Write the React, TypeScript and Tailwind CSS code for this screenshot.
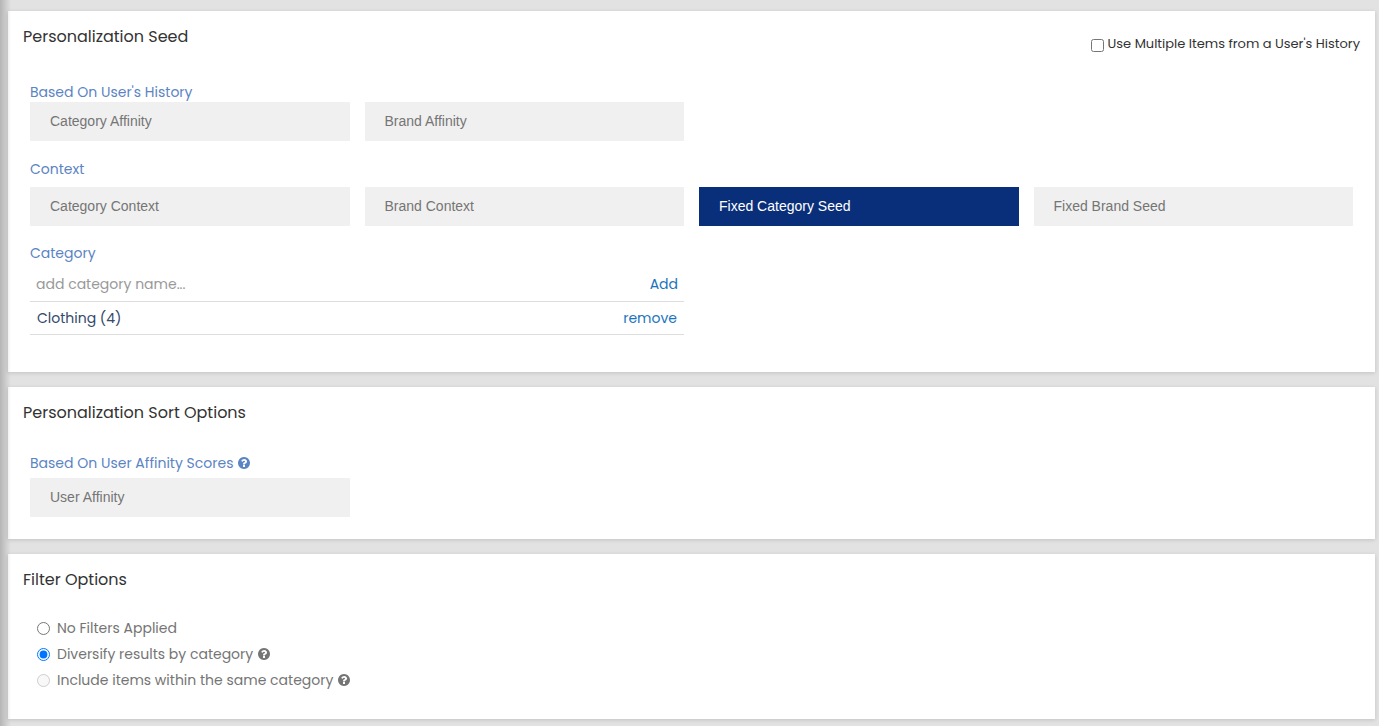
import { useState } from "react";
import type { ReactNode } from "react";
import clsx from "clsx";

function HelpIcon() {
  return (
    <svg viewBox="0 0 1792 1792" className="size-3.5 shrink-0" fill="currentColor" role="img" aria-label="Help">
      <path d="M1024 1376v-192q0-14-9-23t-23-9h-192q-14 0-23 9t-9 23v192q0 14 9 23t23 9h192q14 0 23-9t9-23zm256-672q0-88-55.5-163t-138.5-116-170-41q-243 0-371 213-15 24 8 42l132 100q7 6 19 6 16 0 25-12 53-68 86-92 34-24 86-24 48 0 85.500 26t37.500 59q0 38-20 61t-68 45q-63 28-115.500 86.500t-52.500 125.500v36q0 14 9 23t23 9h192q14 0 23-9t9-23q0-19 21.500-49.500t54.500-49.500q32-18 49-28.500t46-35 44.500-48 28-60.500 12.500-81zm384 192q0 209-103 385.500t-279.500 279.500-385.500 103-385.500-103-279.500-279.500-103-385.500 103-385.500 279.500-279.500 385.500-103 385.500 103 279.500 279.500 103 385.500z" />
    </svg>
  );
}

function Card({ title, action, children }: { title: string; action?: ReactNode; children: ReactNode }) {
  return (
    <section className="bg-white pt-4 shadow-[0_1px_4px_rgba(0,0,0,0.14)]">
      <div className="flex h-5 items-start justify-between px-[15px]">
        <h2 className="text-base leading-5 text-[#333]">{title}</h2>
        {action}
      </div>
      {children}
    </section>
  );
}

function Label({ children }: { children: ReactNode }) {
  return <h3 className="flex items-center gap-1 text-sm leading-5 text-[#5b84c4]">{children}</h3>;
}

function Tile({ label, selected, onSelect }: { label: string; selected: boolean; onSelect: () => void }) {
  return (
    <button
      type="button"
      aria-pressed={selected}
      onClick={onSelect}
      className={clsx(
        "h-[39px] px-5 pb-px text-left font-['Liberation_Sans',sans-serif] text-sm",
        selected ? "bg-[#0a2f7a] text-white" : "bg-[#f0f0f0] text-[#757575]",
      )}
    >
      {label}
    </button>
  );
}

const historySeeds = ["Category Affinity", "Brand Affinity"];
const contextSeeds = ["Category Context", "Brand Context", "Fixed Category Seed", "Fixed Brand Seed"];
const filters = [
  { id: "none", label: "No Filters Applied", help: false, disabled: false },
  { id: "diversify", label: "Diversify results by category", help: true, disabled: false },
  { id: "same", label: "Include items within the same category", help: true, disabled: true },
];

export default function App() {
  const [seed, setSeed] = useState("Fixed Category Seed");
  const [sorted, setSorted] = useState(false);
  const [filter, setFilter] = useState("diversify");
  const [multiple, setMultiple] = useState(false);
  const [draft, setDraft] = useState("");
  const [categories, setCategories] = useState(["Clothing (4)"]);

  const addCategory = () => {
    if (draft.trim()) {
      setCategories([...categories, draft.trim()]);
      setDraft("");
    }
  };

  return (
    <div className="relative min-h-screen bg-[#e2e2e2] font-[Poppins,Inter,sans-serif]">
      <main className="flex flex-col gap-[15px] pt-[11px] pr-1 pb-[7px] pl-2">
        <Card
          title="Personalization Seed"
          action={
            <label className="flex items-center gap-1 pt-2 text-[13px] leading-4 text-[#333]">
              <input
                type="checkbox"
                checked={multiple}
                onChange={(e) => setMultiple(e.target.checked)}
                className="mt-1 size-[13px]"
              />
              Use Multiple Items from a User's History
            </label>
          }
        >
          <div className="px-[22px] pt-[35px] pb-[37px]">
            <Label>Based On User's History</Label>
            <div className="grid grid-cols-4 gap-[15px]">
              {historySeeds.map((s) => (
                <Tile key={s} label={s} selected={seed === s} onSelect={() => setSeed(s)} />
              ))}
            </div>
            <div className="pt-[18px] pb-2">
              <Label>Context</Label>
            </div>
            <div className="grid grid-cols-4 gap-[15px]">
              {contextSeeds.map((s) => (
                <Tile key={s} label={s} selected={seed === s} onSelect={() => setSeed(s)} />
              ))}
            </div>
            <div className="grid grid-cols-2 gap-[15px] pt-[17px]">
              <div className="text-sm">
                <Label>Category</Label>
                <div className="mt-1 flex h-[35px] items-center border-b border-[#ddd] px-1.5 pb-px">
                  <input
                    type="text"
                    aria-label="Category name"
                    placeholder="add category name..."
                    value={draft}
                    onChange={(e) => setDraft(e.target.value)}
                    className="min-w-0 flex-1 text-[#34496b] outline-none placeholder:text-[#999]"
                  />
                  <button type="button" onClick={addCategory} className="text-[#1c75bc]">
                    Add
                  </button>
                </div>
                <ul>
                  {categories.map((c) => (
                    <li key={c} className="flex h-[33px] items-center justify-between border-b border-[#ddd] px-[7px] pb-px text-[#34496b]">
                      {c}
                      <button
                        type="button"
                        onClick={() => setCategories(categories.filter((x) => x !== c))}
                        className="text-[#1c75bc]"
                      >
                        remove
                      </button>
                    </li>
                  ))}
                </ul>
              </div>
            </div>
          </div>
        </Card>

        <Card title="Personalization Sort Options">
          <div className="px-[22px] pt-[30px] pb-[22px]">
            <Label>
              Based On User Affinity Scores <HelpIcon />
            </Label>
            <div className="mt-[5px] grid grid-cols-4 gap-[15px]">
              <Tile label="User Affinity" selected={sorted} onSelect={() => setSorted(!sorted)} />
            </div>
          </div>
        </Card>

        <Card title="Filter Options">
          <div className="flex flex-col gap-1.5 px-[29px] pt-7 pb-[29px] text-sm leading-5 text-[#757575]">
            {filters.map((f) => (
              <div key={f.id} className="flex items-center gap-1">
                <label className="flex items-center gap-[7px]">
                  <input
                    type="radio"
                    name="filter"
                    checked={filter === f.id}
                    disabled={f.disabled}
                    onChange={() => setFilter(f.id)}
                    className="size-[13px]"
                  />
                  {f.label}
                </label>
                {f.help && <HelpIcon />}
              </div>
            ))}
          </div>
        </Card>
      </main>
      <div className="pointer-events-none absolute inset-y-0 left-0 w-[11px] bg-linear-to-r from-black/20 to-transparent" />
    </div>
  );
}
